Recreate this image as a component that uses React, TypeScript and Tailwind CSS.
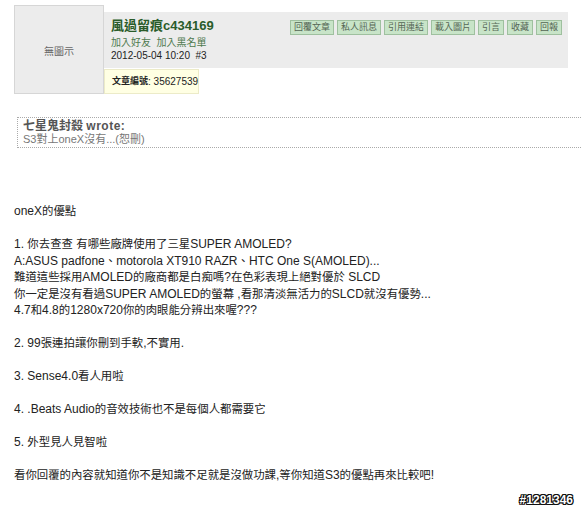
import React from "react";

const buttons = ["回覆文章", "私人訊息", "引用連結", "載入圖片", "引言", "收藏", "回報"];

const body: string[] = [
  "oneX的優點",
  "",
  "1. 你去查查 有哪些廠牌使用了三星SUPER AMOLED?",
  "A:ASUS padfone、motorola XT910 RAZR、HTC One S(AMOLED)...",
  "難道這些採用AMOLED的廠商都是白痴嗎?在色彩表現上絕對優於 SLCD",
  "你一定是沒有看過SUPER AMOLED的螢幕 ,看那清淡無活力的SLCD就沒有優勢...",
  "4.7和4.8的1280x720你的肉眼能分辨出來喔???",
  "",
  "2. 99張連拍讓你刪到手軟,不實用.",
  "",
  "3. Sense4.0看人用啦",
  "",
  "4. .Beats Audio的音效技術也不是每個人都需要它",
  "",
  "5. 外型見人見智啦",
  "",
  "看你回覆的內容就知道你不是知識不足就是沒做功課,等你知道S3的優點再來比較吧!",
];

function Mixed({ text }: { text: string }) {
  const parts = text.split(/([\u3000-\u303f\u4e00-\u9fff\uff00-\uffef]+)/);
  return (
    <>
      {parts.map((p, i) =>
        i % 2 === 1 ? (
          <span key={i} className="text-[11.4px]">
            {p}
          </span>
        ) : (
          <span key={i}>{p}</span>
        )
      )}
    </>
  );
}

export default function App() {
  return (
    <div
      className="relative w-[581px] h-[506px] overflow-hidden bg-white"
      style={{ fontFamily: '"Liberation Sans", Arial, "Noto Sans CJK TC", sans-serif' }}
    >
      <div className="flex pt-[5px] pl-[14px]">
        <div className="w-[90px] h-[89px] shrink-0 bg-[#ececec] border border-[#d6d6d6] flex items-center justify-center pt-[3px] text-[10px] text-[#666]">
          無圖示
        </div>
        <div className="flex flex-col w-[464px]">
          <div className="mt-[7px] h-[56px] bg-[#ececec] flex justify-between pl-[7px] pr-[6px]">
            <div className="flex flex-col pt-[6px]">
              <div className="text-[13px] leading-[16px] font-bold text-[#2a5c2a] whitespace-nowrap">
                風過留痕c434169
              </div>
              <div className="mt-[2px] text-[10px] leading-[13px] text-[#4f7a4f] whitespace-nowrap">
                加入好友&nbsp;&nbsp;加入黑名單
              </div>
              <div className="text-[10px] leading-[13px] text-[#222] whitespace-nowrap">
                2012-05-04 10:20&nbsp;&nbsp;#3
              </div>
            </div>
            <div className="flex gap-[3px] pt-[8px] items-start">
              {buttons.map((b) => (
                <div
                  key={b}
                  className="h-[15px] px-[3px] bg-[#c8e4c8] border border-[#9fc09f] text-[9px] leading-[13px] text-[#556655] whitespace-nowrap"
                >
                  {b}
                </div>
              ))}
            </div>
          </div>
          <div className="mt-[1px] w-[95px] h-[25px] bg-[#ffffe3] border border-[#ecebc8] flex items-center pl-[7px] text-[10px] text-[#222] whitespace-nowrap">
            <span className="font-bold text-[9px]">文章編號</span>: 35627539
          </div>
        </div>
      </div>

      <div className="mt-[23px] ml-[17px] w-[580px] border border-dotted border-[#aaaaaa] pl-[5px] py-[2px]">
        <div className="text-[12px] leading-[13px] font-bold text-[#555]">
          七星鬼封殺 <span className="tracking-[0.5px]">wrote:</span>
        </div>
        <div className="text-[11px] leading-[12px] text-[#777]">S3對上oneX沒有...(恕刪)</div>
      </div>

      <div className="mt-[55px] pl-[14px] text-[12px] leading-[16.5px] text-[#222]">
        {body.map((line, i) =>
          line === "" ? (
            <div key={i} className="h-[16.5px]" />
          ) : (
            <div key={i} className="whitespace-nowrap">
              <Mixed text={line} />
            </div>
          )
        )}
      </div>

      <div className="mt-[8px] pr-[8px] text-right text-[12px] leading-[16px] font-bold text-white [text-shadow:1px_0_#111,-1px_0_#111,0_1px_#111,0_-1px_#111,1px_1px_#111,-1px_-1px_#111,1px_-1px_#111,-1px_1px_#111]">
        #1281346
      </div>
    </div>
  );
}
